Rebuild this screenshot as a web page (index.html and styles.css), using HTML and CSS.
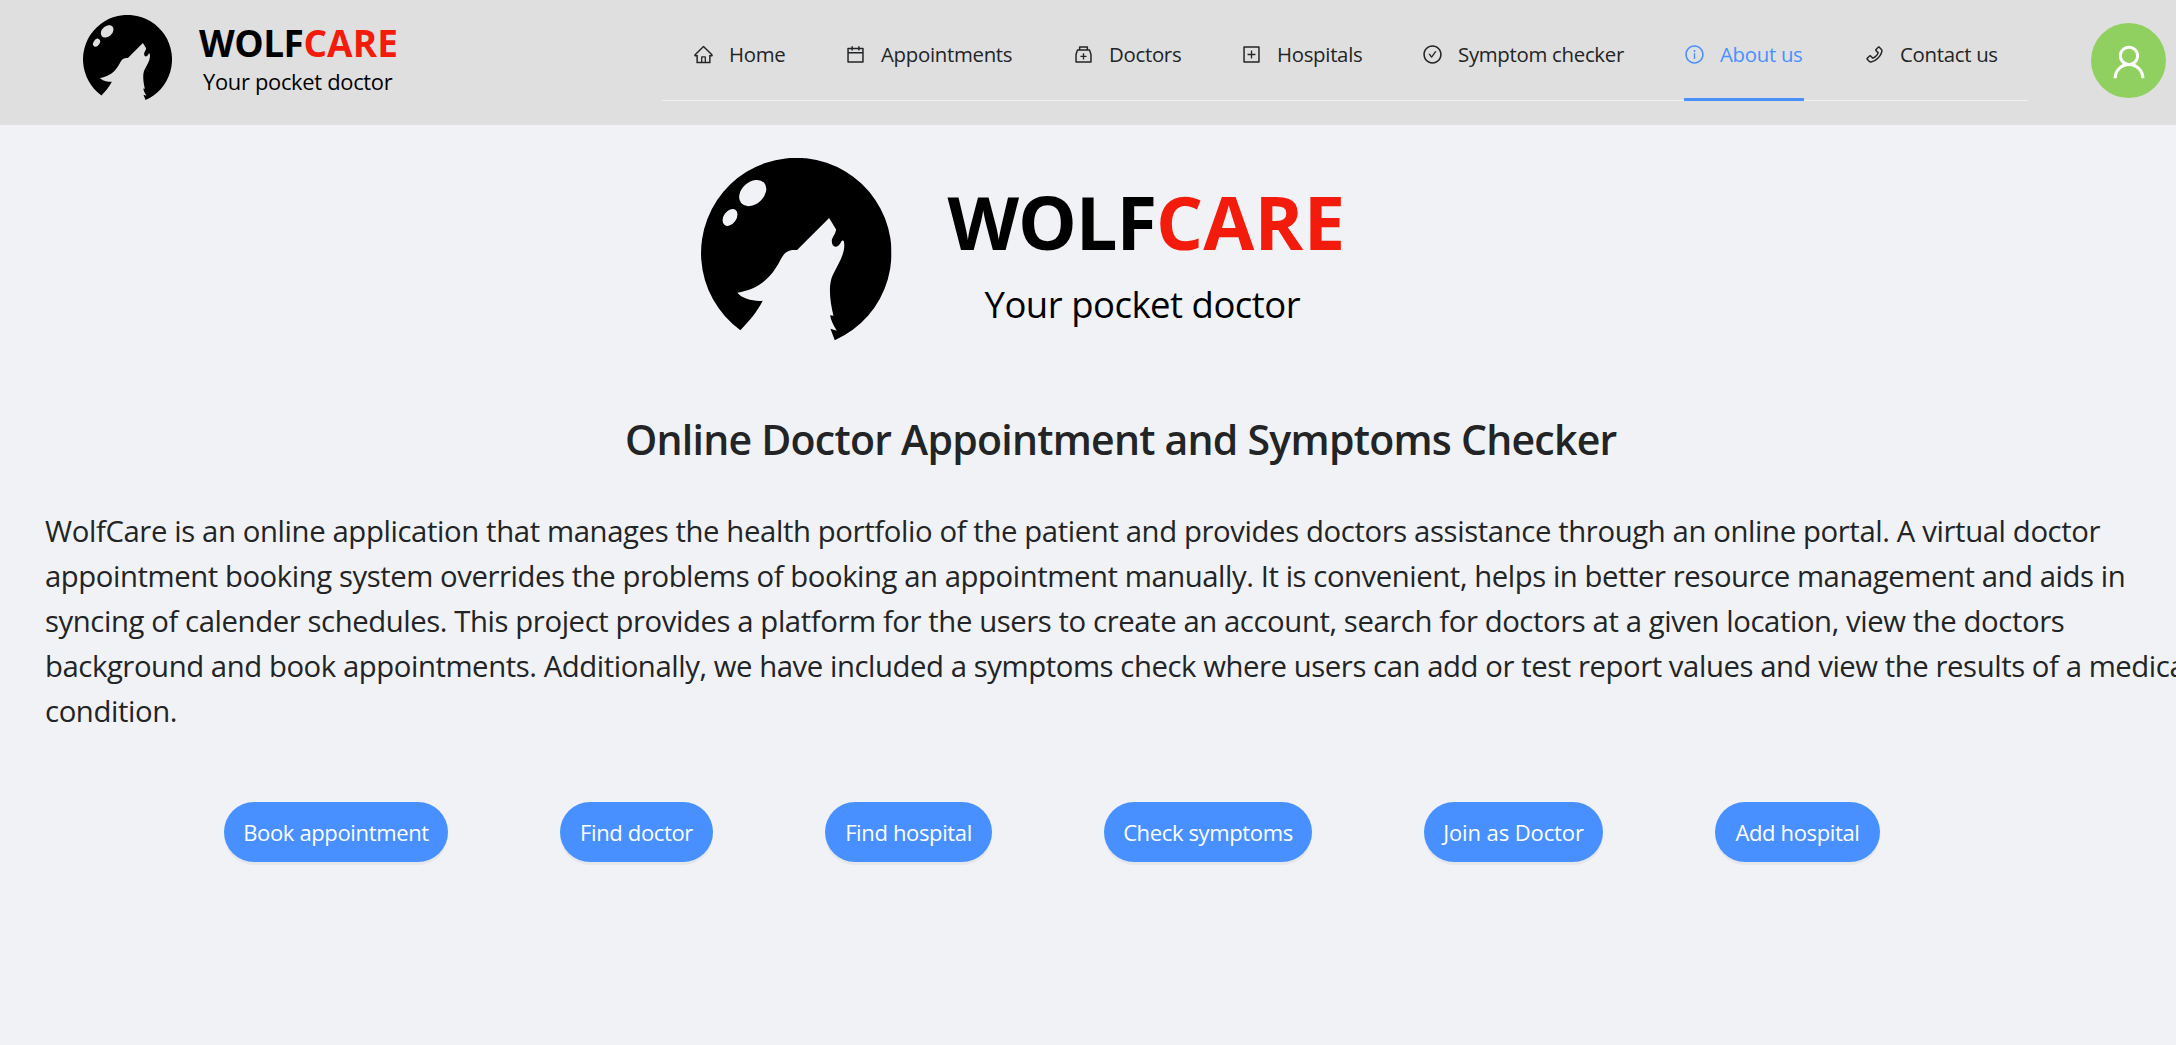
FILE: index.html
```html
<!DOCTYPE html>
<html lang="en">
<head>
<meta charset="utf-8">
<title>WolfCare</title>
<link rel="stylesheet" href="styles.css">
</head>
<body>
<svg class="defs" aria-hidden="true">
  <symbol id="wolf" viewBox="16 15 571 571">
    <path d="M417 561A285.500 285.500 0 1 0 134 531C160 505 185 475 201 443C175 446 138 436 125 419C175 410 213 388 240 345C262 312 262 287 304 291L400 195L421 229C419 245 408 252 408 264C408 285 426 286 435 268C438 262 441 261 444 264C452 300 425 335 410 368C396 400 404 450 413 488L403 486C405 500 412 515 423 533L404 527Z"/>
    <ellipse class="shine" cx="171" cy="120" rx="46" ry="33" transform="rotate(-42 171 120)"/>
    <ellipse class="shine" cx="103" cy="193" rx="28" ry="19" transform="rotate(-55 103 193)"/>
  </symbol>
</svg>

<header class="header">
  <div class="brand brand-small">
    <svg class="brand-logo"><use href="#wolf"/></svg>
    <div class="brand-text">
      <div class="brand-name">WOLF<span class="red">CARE</span></div>
      <div class="brand-tag">Your pocket doctor</div>
    </div>
  </div>
  <nav class="menu">
    <a class="item"><svg class="icon" viewBox="0 0 1024 1024"><path d="M946.5 505L560.1 118.800l-25.900-25.900a31.500 31.500 0 0 0-44.400 0L77.500 505a63.900 63.900 0 0 0-18.800 46c.4 35.200 29.700 63.300 64.900 63.300h42.500V940h691.800V614.300h43.400c17.100 0 33.200-6.700 45.300-18.800a63.600 63.600 0 0 0 18.700-45.300c0-17-6.700-33.100-18.800-45.200zM568 868H456V664h112v204zm217.900-325.700V868H632V640c0-22.100-17.900-40-40-40H432c-22.100 0-40 17.900-40 40v228H238.100V542.300h-96l370-369.700 23.100 23.100L882 542.300h-96.100z"/></svg><span class="w-home">Home</span></a>
    <a class="item"><svg class="icon" viewBox="0 0 1024 1024"><path d="M880 184H712v-64c0-4.400-3.600-8-8-8h-56c-4.400 0-8 3.600-8 8v64H384v-64c0-4.400-3.600-8-8-8h-56c-4.400 0-8 3.600-8 8v64H144c-17.700 0-32 14.300-32 32v664c0 17.700 14.300 32 32 32h736c17.700 0 32-14.300 32-32V216c0-17.700-14.300-32-32-32zm-40 656H184V460h656v380zM184 392V256h128v48c0 4.400 3.600 8 8 8h56c4.400 0 8-3.600 8-8v-48h256v48c0 4.400 3.600 8 8 8h56c4.400 0 8-3.600 8-8v-48h128v136H184z"/></svg><span class="w-appt">Appointments</span></a>
    <a class="item"><svg class="icon" viewBox="0 0 1024 1024"><path d="M839.200 278.100a32 32 0 0 0-30.400-22.100H736V144c0-17.700-14.300-32-32-32H320c-17.700 0-32 14.300-32 32v112h-72.800a31.900 31.900 0 0 0-30.400 22.100L112 502v378c0 17.700 14.300 32 32 32h736c17.700 0 32-14.300 32-32V502l-72.800-223.900zM360 184h304v72H360v-72zm480 656H184V513.400L244.300 328h535.400L840 513.400V840zM652 572H544V464c0-4.400-3.600-8-8-8h-48c-4.400 0-8 3.600-8 8v108H372c-4.400 0-8 3.600-8 8v48c0 4.400 3.600 8 8 8h108v108c0 4.400 3.600 8 8 8h48c4.400 0 8-3.600 8-8V636h108c4.400 0 8-3.600 8-8v-48c0-4.400-3.600-8-8-8z"/></svg><span class="w-doc">Doctors</span></a>
    <a class="item"><svg class="icon" viewBox="0 0 1024 1024"><path d="M328 544h152v152c0 4.400 3.600 8 8 8h48c4.400 0 8-3.600 8-8V544h152c4.400 0 8-3.600 8-8v-48c0-4.400-3.600-8-8-8H544V328c0-4.400-3.600-8-8-8h-48c-4.400 0-8 3.600-8 8v152H328c-4.400 0-8 3.600-8 8v48c0 4.400 3.600 8 8 8z"/><path d="M880 112H144c-17.700 0-32 14.300-32 32v736c0 17.700 14.300 32 32 32h736c17.700 0 32-14.300 32-32V144c0-17.700-14.300-32-32-32zm-40 728H184V184h656v656z"/></svg><span class="w-hosp">Hospitals</span></a>
    <a class="item"><svg class="icon" viewBox="0 0 1024 1024"><path d="M699 353h-46.900c-10.200 0-19.900 4.900-25.900 13.300L469 584.300l-71.200-98.800c-6-8.300-15.600-13.300-25.900-13.300H325c-6.500 0-10.300 7.400-6.500 12.700l124.600 172.800a31.800 31.800 0 0 0 51.700 0l210.600-292c3.900-5.300.1-12.700-6.400-12.700z"/><path d="M512 64C264.600 64 64 264.600 64 512s200.600 448 448 448 448-200.600 448-448S759.400 64 512 64zm0 820c-205.400 0-372-166.600-372-372s166.600-372 372-372 372 166.600 372 372-166.600 372-372 372z"/></svg><span class="w-symp">Symptom checker</span></a>
    <a class="item active"><svg class="icon" viewBox="0 0 1024 1024"><path d="M512 64C264.600 64 64 264.600 64 512s200.600 448 448 448 448-200.600 448-448S759.400 64 512 64zm0 820c-205.400 0-372-166.600-372-372s166.600-372 372-372 372 166.600 372 372-166.600 372-372 372z"/><path d="M464 336a48 48 0 1 0 96 0 48 48 0 1 0-96 0zm72 112h-48c-4.400 0-8 3.600-8 8v272c0 4.400 3.600 8 8 8h48c4.400 0 8-3.600 8-8V456c0-4.400-3.600-8-8-8z"/></svg><span class="w-about">About us</span></a>
    <a class="item"><svg class="icon" viewBox="0 0 1024 1024"><path d="M877.100 238.700L770.600 132.300c-13-13-30.400-20.300-48.800-20.300s-35.800 7.200-48.800 20.300L558.300 246.800c-13 13-20.300 30.500-20.300 48.900 0 18.500 7.200 35.800 20.300 48.900l89.600 89.700a405.460 405.460 0 0 1-86.400 127.300c-36.700 36.900-79.600 66-127.200 86.600l-89.600-89.700c-13-13-30.400-20.300-48.800-20.300a68.200 68.200 0 0 0-48.800 20.300L132.300 673c-13 13-20.300 30.500-20.300 48.900 0 18.500 7.200 35.800 20.300 48.900l106.400 106.400c22.200 22.200 52.800 34.900 84.200 34.900 6.500 0 12.800-.5 19.200-1.600 132.400-21.800 263.800-92.300 369.900-198.300C818 606 888.400 474.600 910.400 342.100c6.300-37.600-6.300-76.300-33.300-103.400zm-37.600 91.500c-19.500 117.900-82.900 235.500-178.400 331s-213 158.900-330.900 178.400c-14.800 2.500-30-2.500-40.800-13.200L184.900 721.900 295.700 611l119.800 120 .9.900 21.600-8a481.290 481.290 0 0 0 285.700-285.800l8-21.600-120.800-120.700 110.800-110.900 104.500 104.500c10.800 10.800 15.800 26 13.300 40.800z"/></svg><span class="w-cont">Contact us</span></a>
  </nav>
  <div class="avatar"><svg viewBox="0 0 1024 1024"><path d="M858.500 763.600a374 374 0 0 0-80.600-119.500 375.630 375.630 0 0 0-119.500-80.600c-.4-.2-.8-.3-1.200-.5C719.500 518 760 444.700 760 362c0-137-111-248-248-248S264 225 264 362c0 82.700 40.500 156 102.800 201.100-.4.200-.8.300-1.200.5-44.800 18.900-85 46-119.500 80.600a375.630 375.630 0 0 0-80.600 119.500A371.700 371.700 0 0 0 136 901.800a8 8 0 0 0 8 8.200h60c4.400 0 7.900-3.500 8-7.800 2-77.200 33-149.500 87.800-204.300 56.700-56.700 132-87.900 212.200-87.900s155.500 31.200 212.200 87.900C779 752.700 810 825 812 902.200c.1 4.400 3.600 7.800 8 7.800h60a8 8 0 0 0 8-8.200c-1-47.800-10.900-94.300-29.500-138.200zM512 534c-45.900 0-89.100-17.900-121.600-50.400S340 407.900 340 362c0-45.900 17.900-89.100 50.400-121.600S466.100 190 512 190s89.100 17.900 121.600 50.400S684 316.100 684 362c0 45.900-17.900 89.100-50.400 121.600S557.900 534 512 534z"/></svg></div>
</header>

<main class="content">
  <div class="brand brand-big">
    <svg class="brand-logo"><use href="#wolf"/></svg>
    <div class="brand-text">
      <div class="brand-name">WOLF<span class="red">CARE</span></div>
      <div class="brand-tag">Your pocket doctor</div>
    </div>
  </div>
  <h1 class="title">Online Doctor Appointment and Symptoms Checker</h1>
  <p class="about">
    <span class="line l1">WolfCare is an online application that manages the health portfolio of the patient and provides doctors assistance through an online portal. A virtual doctor</span>
    <span class="line l2">appointment booking system overrides the problems of booking an appointment manually. It is convenient, helps in better resource management and aids in</span>
    <span class="line l3">syncing of calender schedules. This project provides a platform for the users to create an account, search for doctors at a given location, view the doctors</span>
    <span class="line l4">background and book appointments. Additionally, we have included a symptoms check where users can add or test report values and view the results of a medical</span>
    <span class="line">condition.</span>
  </p>
  <div class="actions">
    <button class="btn b-book">Book appointment</button>
    <button class="btn b-find">Find doctor</button>
    <button class="btn b-hosp">Find hospital</button>
    <button class="btn b-check">Check symptoms</button>
    <button class="btn b-join">Join as Doctor</button>
    <button class="btn b-add">Add hospital</button>
  </div>
</main>
</body>
</html>
```

FILE: styles.css
```css
* { box-sizing: border-box; }

body {
  margin: 0;
  height: 1045px;
  overflow: hidden;
  background: #f0f2f5;
  color: #222426;
  font-family: "Open Sans", "Noto Sans", sans-serif;
}

.defs { display: none; }
.shine { fill: var(--cut); }

/* Header */
.header {
  display: flex;
  height: 125px;
  background: #dfdfdf;
}

.brand { display: flex; color: #000; white-space: nowrap; }
.brand-name { font-weight: 700; }
.red { color: #f31b0c; }
.brand-logo { display: block; flex: none; }

.brand-small { --cut: #dfdfdf; width: 662px; padding: 15px 0 0 83px; }
.brand-small .brand-logo { width: 89px; height: 89px; }
.brand-small .brand-text { padding: 10px 0 0 27px; }
.brand-small .brand-name { font-size: 37px; line-height: 36px; letter-spacing: -0.5px; }
.brand-small .red { letter-spacing: 0.1px; }
.brand-small .brand-tag { margin: 5px 0 0 4px; font-size: 21.9px; line-height: 32px; letter-spacing: -0.3px; }

.menu {
  display: flex;
  flex: none;
  width: 1366px;
  height: 93px;
  margin-top: 8px;
  padding-left: 1px;
  border-bottom: 1px solid #f0f0f0;
  font-size: 20.4px;
  letter-spacing: -0.3px;
}

.item {
  display: flex;
  align-items: center;
  height: 93px;
  margin: 0 30px;
  padding-bottom: 1px;
  white-space: nowrap;
}
.item.active { padding: 2px 0 0; border-bottom: 3px solid #4890ff; color: #4890ff; }
.icon { width: 21px; height: 21px; margin-right: 15px; fill: currentColor; }
.w-home { width: 56px; }
.w-appt { width: 132px; }
.w-doc { width: 72px; }
.w-hosp { width: 85px; }
.w-symp { width: 166px; }
.w-about { width: 84px; }
.w-cont { width: 98px; }

.avatar {
  display: flex;
  justify-content: center;
  width: 75px;
  height: 75px;
  margin: 23px 10px 0 auto;
  padding-top: 17px;
  border-radius: 50%;
  background: #90d060;
}
.avatar svg { width: 42px; height: 44px; fill: #fff; }

/* Page content */
.brand-big { --cut: #f0f2f5; padding: 33px 0 0 701px; }
.brand-big .brand-logo { width: 190.5px; height: 190.5px; }
.brand-big .brand-text { padding: 19px 0 0 56px; }
.brand-big .brand-name { font-size: 74px; line-height: 90px; letter-spacing: -1.1px; }
.brand-big .red { letter-spacing: 0.2px; }
.brand-big .brand-tag { margin: 10px 0 0 37px; font-size: 36.5px; line-height: 54px; letter-spacing: -0.5px; }

.title {
  margin: 60px 0 0 625px;
  font-size: 41px;
  font-weight: 600;
  line-height: 60px;
  letter-spacing: -0.75px;
  white-space: nowrap;
}

.about { margin: 40px 0 0 45px; font-size: 29.3px; line-height: 45px; }
.line { display: block; letter-spacing: -0.4px; white-space: nowrap; }
.l1 { letter-spacing: -0.385px; }
.l2 { letter-spacing: -0.436px; }
.l3 { letter-spacing: -0.412px; }
.l4 { letter-spacing: -0.433px; }

.actions { display: flex; gap: 112px; margin: 68px 0 0 224px; }
.btn {
  height: 60px;
  padding: 0;
  border: 0;
  border-radius: 30px;
  background: #4890ff;
  box-shadow: 0 3px 0 rgba(0, 0, 0, 0.045);
  color: #fff;
  font: 22px/60px "Open Sans", "Noto Sans", sans-serif;
  letter-spacing: -0.36px;
  white-space: nowrap;
}
.b-book { width: 224px; }
.b-find { width: 153px; }
.b-hosp { width: 167px; }
.b-check { width: 208px; }
.b-join { width: 179px; letter-spacing: -0.1px; }
.b-add { width: 165px; }
```
